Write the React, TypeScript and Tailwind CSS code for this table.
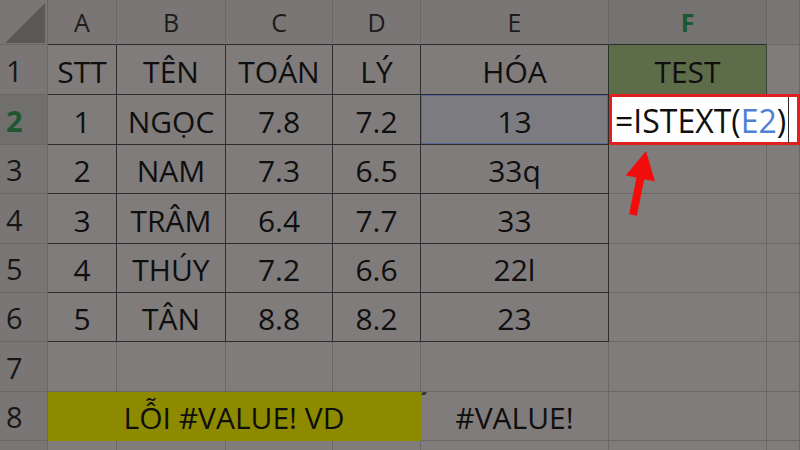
import { ReactNode } from "react";

const grid = "border-[#6b6767]";
const dark = "border-[#2e2d2d]";

const cols = ["A", "B", "C", "D", "E", "F", ""];

const rows: string[][] = [
  ["STT", "TÊN", "TOÁN", "LÝ", "HÓA"],
  ["1", "NGỌC", "7.8", "7.2", "13"],
  ["2", "NAM", "7.3", "6.5", "33q"],
  ["3", "TRÂM", "6.4", "7.7", "33"],
  ["4", "THÚY", "7.2", "6.6", "22l"],
  ["5", "TÂN", "8.8", "8.2", "23"],
];

function Cell({ children, className = "" }: { children?: ReactNode; className?: string }) {
  return (
    <div className={`flex items-center justify-center border-r border-b overflow-hidden whitespace-nowrap ${className}`}>
      {children}
    </div>
  );
}

function RowHead({ n, active = false, inTable = false }: { n: string; active?: boolean; inTable?: boolean }) {
  return (
    <div
      className={`flex items-center pl-[6px] pt-[2px] border-b ${grid} border-r ${inTable ? dark : grid} ${
        active ? "bg-[#716e6e] text-[#1d5630] font-bold" : "bg-[#7a7676] text-[#161616]"
      } text-[29px]`}
    >
      {n}
    </div>
  );
}

export default function App() {
  return (
    <div className="relative w-[800px] h-[450px] overflow-hidden bg-[#807c7c] font-['Open_Sans',sans-serif] text-[#0f0f0f]">
      <div className="grid w-full h-full grid-cols-[48px_69px_109px_107px_88px_188px_158px_1fr] grid-rows-[45px_50px_50px_49px_50px_49px_49px_50px_49px_1fr]">
        {/* corner */}
        <div className={`relative bg-[#7a7676] border-r border-b ${grid}`}>
          <svg width="48" height="45" className="absolute inset-0">
            <polygon points="5,43 45,43 45,3" fill="#5b5858" />
          </svg>
        </div>
        {cols.map((c, i) => (
          <Cell
            key={c + i}
            className={`bg-[#7a7676] text-[25px] pt-[2px] ${i < 6 ? `border-b-[#2e2d2d] ${grid}` : grid} ${
              c === "F" ? "bg-[#757272] text-[#1d5630] font-bold" : "text-[#1c1c1c]"
            }`}
          >
            {c}
          </Cell>
        ))}

        {rows.map((r, ri) => (
          <div key={ri} className="contents">
            <RowHead n={String(ri + 1)} active={ri === 1} inTable />
            {r.map((v, ci) =>
              ri === 1 && ci === 4 ? (
                <Cell key={ci} className={`text-[30px] ${dark} bg-[#7c7b80]`}>
                  <div className="w-full h-full flex items-center justify-center pt-[3px] border border-[#5a6898]">{v}</div>
                </Cell>
              ) : (
                <Cell key={ci} className={`text-[30px] pt-[3px] ${dark}`}>
                  {v}
                </Cell>
              )
            )}
            {ri === 0 && (
              <>
                <Cell className={`text-[30px] pt-[3px] bg-[#5e6d49] border-[#3e3f3a]`}>TEST</Cell>
                <Cell className={grid} />
              </>
            )}
            {ri === 1 && (
              <div className="col-span-2 relative flex items-center bg-white border-[3px] border-[#e01f1f] -mt-[1px] text-[32px] pl-[3px] pt-[2px] whitespace-nowrap">
                <span>=ISTEXT(</span>
                <span className="text-[#4f80d6]">E2</span>
                <span>)</span>
                <span className="ml-[2px] -mt-[2px] w-[1px] h-[46px] bg-[#2a2a2a]" />
              </div>
            )}
            {ri > 1 && (
              <>
                <Cell className={grid} />
                <Cell className={grid} />
              </>
            )}
          </div>
        ))}

        {/* row 7 */}
        <RowHead n="7" />
        {cols.map((c, i) => (
          <Cell key={"r7" + i} className={grid} />
        ))}

        {/* row 8 */}
        <RowHead n="8" />
        <Cell className={`col-span-4 bg-[#8d8a00] text-[30px] pt-[3px] border-[#8d8a00]`}>LỖI #VALUE! VD</Cell>
        <Cell className={`relative text-[30px] pt-[3px] ${grid}`}>
          <span className="absolute left-[1px] top-0 w-[4px] h-[3px] bg-[#2f3a2a] skew-x-[-30deg]" />
          #VALUE!
        </Cell>
        <Cell className={grid} />
        <Cell className={grid} />

        {/* row 9 */}
        <div className={`bg-[#7a7676] border-r ${grid}`} />
        {cols.map((c, i) => (
          <div key={"r9" + i} className={`border-r ${grid}`} />
        ))}
      </div>

      {/* red arrow */}
      <svg className="absolute left-0 top-0 pointer-events-none" width="800" height="450">
        <polygon
          points="646,151 655,181.5 644.3,179.2 636.9,215.8 629.1,214.2 636.5,177.6 625.7,175.4"
          fill="#f20d0d"
        />
      </svg>
    </div>
  );
}
